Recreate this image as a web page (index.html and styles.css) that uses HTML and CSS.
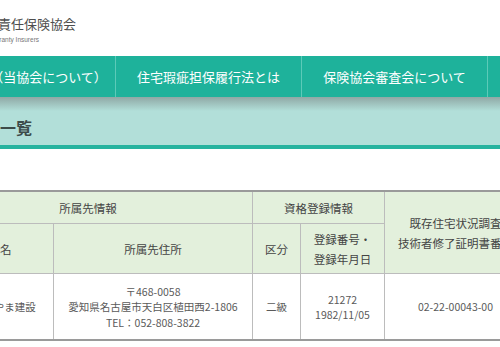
FILE: index.html
```html
<!DOCTYPE html>
<html lang="ja">
<head>
    <meta charset="UTF-8">
    <title>登録者一覧</title>
    <link rel="stylesheet" href="styles.css">
</head>
<body>
<div class="page">
    <div class="siteHeader">
        <div class="logo">
            <span class="logoMain">住宅瑕疵担保責任保険協会</span>
            <span class="logoSub">Housing Warranty Insurers</span>
        </div>
    </div>

    <div class="navBar">
        <a href="#">協会概要（当協会について）</a>
        <a href="#">住宅瑕疵担保履行法とは</a>
        <a href="#">保険協会審査会について</a>
        <a href="#">お問い合わせ</a>
    </div>

    <div class="titleBand">
        <h1>登録者一覧</h1>
    </div>

    <table class="listTable">
        <colgroup>
            <col class="colName">
            <col class="colAddress">
            <col class="colGrade">
            <col class="colNumber">
            <col class="colCert">
        </colgroup>
        <thead>
            <tr class="headRow1">
                <th colspan="2">所属先情報</th>
                <th colspan="2">資格登録情報</th>
                <th rowspan="2">既存住宅状況調査<br>技術者修了証明書番号</th>
            </tr>
            <tr class="headRow2">
                <th>所属先名</th>
                <th>所属先住所</th>
                <th>区分</th>
                <th>登録番号・<br>登録年月日</th>
            </tr>
        </thead>
        <tbody>
            <tr class="dataRow">
                <td>株式会社ひやま建設</td>
                <td>〒468-0058<br>愛知県名古屋市天白区植田西2-1806<br>TEL：052-808-3822</td>
                <td>二級</td>
                <td>21272<br>1982/11/05</td>
                <td>02-22-00043-00</td>
            </tr>
        </tbody>
    </table>
</div>
</body>
</html>
```

FILE: styles.css
```css
html, body
{
    margin: 0;
    overflow: hidden;
    background-color: #fff;
    font-family: "Noto Sans CJK JP", "Noto Sans", sans-serif;
}

.page
{
    overflow: hidden;
    width: 500px;
}

.siteHeader
{
    height: 56px;
    box-sizing: border-box;
    padding-top: 14px;
}

.logo
{
    display: flex;
    flex-direction: column;
    align-items: flex-start;
    margin-left: -80px;
}

.logoMain
{
    font-size: 13px;
    line-height: 20px;
    color: #4d4d4d;
    white-space: nowrap;
}

.logoSub
{
    font-family: "Liberation Sans", sans-serif;
    font-size: 6.5px;
    line-height: 12px;
    color: #777;
    margin-left: 42px;
    white-space: nowrap;
}

.navBar
{
    display: flex;
    height: 41px;
    background-color: #1eb29b;
    margin-left: -70px;
}

.navBar a
{
    flex: 0 0 185px;
    border-right: 1px solid #5ccab8;
    color: #fff;
    font-size: 13px;
    line-height: 41px;
    text-align: center;
    text-decoration: none;
    white-space: nowrap;
}

.titleBand
{
    height: 52px;
    box-sizing: border-box;
    background: linear-gradient(#8fa8a5 0, #b2dfd9 14px);
    border-bottom: 4px solid #27b39f;
}

.titleBand h1
{
    margin: 0 0 0 -48px;
    font-size: 16px;
    line-height: 20px;
    padding-top: 20px;
    color: #3d4b49;
    font-weight: bold;
}

.listTable
{
    margin: 41px 0 0 -77px;
    border-collapse: collapse;
    table-layout: fixed;
    width: 603px;
    border-top: 2px solid #9a9a9a;
    border-bottom: 2px solid #9a9a9a;
}

.colName { width: 130px; }
.colAddress { width: 199px; }
.colGrade { width: 48px; }
.colNumber { width: 84px; }
.colCert { width: 142px; }

.listTable th, .listTable td
{
    border: 1px solid #bcbcbc;
    text-align: center;
    padding: 0;
    white-space: nowrap;
}

.listTable th
{
    background-color: #e3f0dc;
    color: #444;
    font-size: 11.5px;
    line-height: 20px;
    font-weight: normal;
}

.headRow1 th
{
    height: 31px;
}

.headRow2 th
{
    height: 49px;
}

.listTable td
{
    color: #5a5a5a;
    font-size: 10.5px;
    line-height: 15.5px;
    height: 64px;
    padding-top: 1px;
}
```
